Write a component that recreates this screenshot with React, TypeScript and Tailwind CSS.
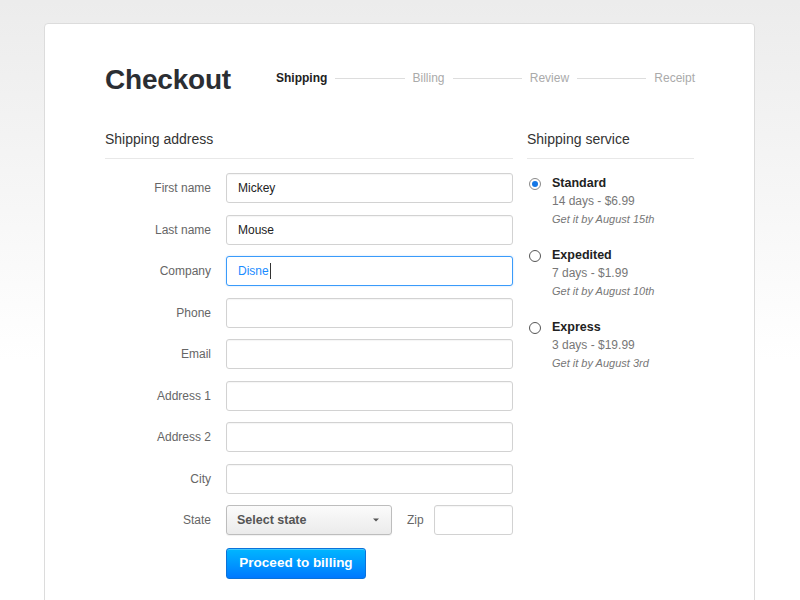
import React from 'react';

const fields = [
  { label: 'First name', value: 'Mickey' },
  { label: 'Last name', value: 'Mouse' },
  { label: 'Company', value: 'Disne', focus: true },
  { label: 'Phone', value: '' },
  { label: 'Email', value: '' },
  { label: 'Address 1', value: '' },
  { label: 'Address 2', value: '' },
  { label: 'City', value: '' },
];

const services = [
  { name: 'Standard', price: '14 days - $6.99', eta: 'Get it by August 15th', checked: true },
  { name: 'Expedited', price: '7 days - $1.99', eta: 'Get it by August 10th' },
  { name: 'Express', price: '3 days - $19.99', eta: 'Get it by August 3rd' },
];

const steps = ['Shipping', 'Billing', 'Review', 'Receipt'];

const inputBox = 'h-[30px] rounded-[3px] border border-[#d2d2d2] bg-white shadow-[inset_0_1px_1px_rgba(0,0,0,0.04)]';

const App: React.FC = () => {
  return (
    <div
      className="h-[600px] overflow-hidden bg-gradient-to-b from-[#ececec] to-white to-60% pt-[23px] pl-[44px]"
      style={{ fontFamily: '"Liberation Sans", Arial, sans-serif' }}
    >
      <div className="w-[711px] h-[620px] rounded-t-[4px] border border-[#dcdcdc] bg-white pl-[60px] pr-[59px] pt-[40px]">
        {/* header */}
        <div className="flex items-center justify-between h-[32px]">
          <h1 className="text-[28px] font-bold text-[#2b2e33] tracking-[-0.2px] leading-none">Checkout</h1>
          <div className="flex items-center w-[419px] pb-[4px] text-[12px] text-[#aaaaaa]">
            {steps.map((s, i) => (
              <React.Fragment key={s}>
                {i > 0 && <div className="flex-1 h-px bg-[#dddddd] mx-[8px]" />}
                <span className={i === 0 ? 'font-bold text-[#222]' : ''}>{s}</span>
              </React.Fragment>
            ))}
          </div>
        </div>

        <div className="flex mt-[34px] gap-[14px]">
          {/* shipping address */}
          <div className="w-[408px]">
            <div className="text-[14px] text-[#333] leading-[18px] pb-[10px] border-b border-[#e8e8e8]">Shipping address</div>
            <div className="flex flex-col gap-[11.5px] mt-[14px]">
              {fields.map(f => (
                <div key={f.label} className="flex items-center">
                  <label className="w-[106px] text-right text-[12px] text-[#666]">{f.label}</label>
                  <div
                    className={`ml-[15px] w-[287px] flex items-center px-[11px] text-[12px] ${f.focus ? 'h-[30px] rounded-[3px] border border-[#3a9bfa] bg-white text-[#1a8cff] shadow-[0_0_2px_rgba(40,140,255,0.3)]' : `${inputBox} text-[#222]`}`}
                  >
                    {f.value}
                    {f.focus && <span className="ml-[1px] w-px h-[16px] bg-[#333]" />}
                  </div>
                </div>
              ))}
              <div className="flex items-center">
                <label className="w-[106px] text-right text-[12px] text-[#666]">State</label>
                <div className="ml-[15px] w-[166px] h-[30px] flex items-center justify-between px-[10px] rounded-[3px] border border-[#bdbdbd] bg-gradient-to-b from-[#fbfbfb] to-[#ebebeb] text-[12.5px] font-bold text-[#555] shadow-[0_1px_1px_rgba(0,0,0,0.06)]">
                  Select state
                  <svg width="6" height="4" viewBox="0 0 6 4" className="mr-[2px]">
                    <path d="M0 0.5h6L3 3.5z" fill="#555" />
                  </svg>
                </div>
                <label className="ml-[15px] text-[12px] text-[#666]">Zip</label>
                <div className={`ml-[10px] w-[79px] ${inputBox}`} />
              </div>
              <div className="flex mt-[1px]">
                <button className="ml-[121px] w-[140px] h-[31px] rounded-[3px] border border-[#0b72d9] bg-gradient-to-b from-[#00b6ff] to-[#0078ff] text-[13.5px] font-bold text-white shadow-[inset_0_1px_0_rgba(255,255,255,0.25)]">
                  Proceed to billing
                </button>
              </div>
            </div>
          </div>

          {/* shipping service */}
          <div className="w-[167px]">
            <div className="text-[14px] text-[#333] leading-[18px] pb-[10px] border-b border-[#e8e8e8]">Shipping service</div>
            <div className="flex flex-col gap-[18px] mt-[15px]">
              {services.map(s => (
                <div key={s.name} className="flex">
                  <div className="w-[25px] pt-[4px] pl-[2px]">
                    {s.checked ? (
                      <div className="w-[12px] h-[12px] rounded-full border border-[#8a8a8a] bg-white flex items-center justify-center">
                        <div className="w-[6px] h-[6px] rounded-full bg-[#1477e6]" />
                      </div>
                    ) : (
                      <div className="w-[12px] h-[12px] rounded-full border border-[#555] bg-white" />
                    )}
                  </div>
                  <div>
                    <div className="text-[12.5px] font-bold text-[#222] leading-[18px]">{s.name}</div>
                    <div className="text-[12px] text-[#777] leading-[18px]">{s.price}</div>
                    <div className="text-[11px] italic text-[#777] leading-[18px]">{s.eta}</div>
                  </div>
                </div>
              ))}
            </div>
          </div>
        </div>
      </div>
    </div>
  );
};

export default App;
